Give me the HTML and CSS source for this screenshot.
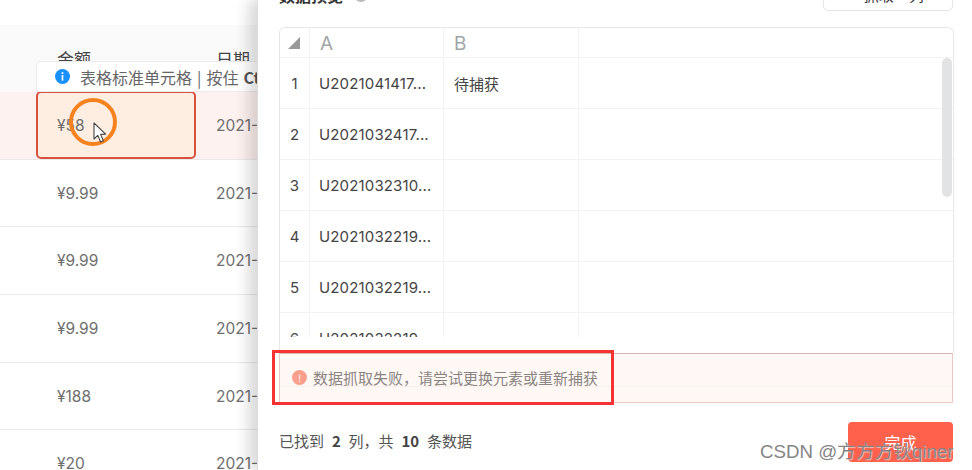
FILE: index.html
```html
<!DOCTYPE html>
<html lang="zh">
<head>
<meta charset="utf-8">
<title>数据预览</title>
<link rel="stylesheet" href="styles.css">
</head>
<body>
<div class="app">
  <main class="page">
    <div class="page-top"></div>
    <div class="row head"><span class="c1">金额</span><span class="c2">日期</span></div>
    <div class="row hot"><div class="c1 picked">¥58</div><span class="c2">2021-04-14</span></div>
    <div class="row"><span class="c1">¥9.99</span><span class="c2">2021-03-24</span></div>
    <div class="row"><span class="c1">¥9.99</span><span class="c2">2021-03-23</span></div>
    <div class="row"><span class="c1">¥9.99</span><span class="c2">2021-03-22</span></div>
    <div class="row"><span class="c1">¥188</span><span class="c2">2021-03-22</span></div>
    <div class="row"><span class="c1">¥20</span><span class="c2">2021-03-22</span></div>
    <div class="tip">
      <svg class="tip-ico" viewBox="0 0 16 16"><circle cx="8" cy="8" r="8" fill="#1890ff"/><rect x="7.1" y="3.4" width="1.8" height="1.9" fill="#fff"/><rect x="7.1" y="6.4" width="1.8" height="6" fill="#fff"/></svg>
      <span>表格标准单元格 | 按住 <b>Ctrl</b></span>
    </div>
    <div class="ring"></div>
    <svg class="cursor" viewBox="0 0 14 22"><path d="M1 1 L1 17 L4.8 13.4 L7.6 20 L10.4 18.8 L7.6 12.4 L12.6 12.2 Z" fill="#fff" stroke="#444" stroke-width="1.1" stroke-linejoin="round"/></svg>
  </main>
  <section class="drawer">
    <header class="d-head">
      <div class="d-title"><b>数据预览</b><span class="help"></span></div>
      <button class="add">+ 抓取一列</button>
    </header>
    <div class="sheet">
      <div class="s-row s-head">
        <div class="s-n"><i class="corner"></i></div><div class="s-a">A</div><div class="s-b">B</div><div class="s-r"></div>
      </div>
      <div class="s-row"><div class="s-n">1</div><div class="s-a">U2021041417...</div><div class="s-b">待捕获</div><div class="s-r"></div></div>
      <div class="s-row"><div class="s-n">2</div><div class="s-a">U2021032417...</div><div class="s-b"></div><div class="s-r"></div></div>
      <div class="s-row"><div class="s-n">3</div><div class="s-a">U2021032310...</div><div class="s-b"></div><div class="s-r"></div></div>
      <div class="s-row"><div class="s-n">4</div><div class="s-a">U2021032219...</div><div class="s-b"></div><div class="s-r"></div></div>
      <div class="s-row"><div class="s-n">5</div><div class="s-a">U2021032219...</div><div class="s-b"></div><div class="s-r"></div></div>
      <div class="s-row s-cut"><div class="s-n">6</div><div class="s-a">U2021032219...</div><div class="s-b"></div><div class="s-r"></div></div>
      <div class="thumb"></div>
    </div>
    <div class="alert">
      <span class="alert-ico">!</span><span>数据抓取失败，请尝试更换元素或重新捕获</span>
    </div>
    <footer class="d-foot">
      <span class="count">已找到 <b>2</b> 列，共 <b>10</b> 条数据</span>
      <button class="done">完成</button>
    </footer>
    <div class="mark"></div>
  </section>
  <div class="wm">CSDN @方方方钬qiner</div>
</div>
</body>
</html>
```
FILE: styles.css
```css
* { box-sizing: border-box; }
html, body { margin: 0; height: 100%; overflow: hidden; background: #fff; }
body { font-family: "Noto Sans CJK SC", "Noto Sans", sans-serif; color: #555; }
.app { position: relative; display: flex; width: 972px; height: 470px; overflow: hidden; }

.page { position: relative; width: 257px; flex: none; overflow: hidden; }
.page-top { height: 25px; }
.row { display: flex; align-items: center; height: 67.7px; padding-left: 36px; border-bottom: 1px solid #e9e9e9; font-size: 15.5px; color: #6e6e6e; font-family: "Inter", "Noto Sans CJK SC", sans-serif; }
.row .c1 { width: 160px; flex: none; padding-left: 21px; }
.row .c2 { white-space: nowrap; padding-left: 20px; }
.head { height: 67px; background: #fafafa; color: #444; border-bottom: none; font-size: 17px; font-family: "Noto Sans CJK SC", sans-serif; }
.hot { background: #fef2f0; }
.picked { height: 68px; display: flex; align-items: center; background: #feeee2; border: 2px solid #d9503f; border-radius: 5px; padding-left: 19px !important; }
.tip { position: absolute; left: 36px; top: 61px; width: 240px; height: 31px; display: flex; align-items: center; gap: 10px; padding-left: 18px; background: #fff; border: 1px solid #ececec; border-radius: 4px 0 0 0; font-size: 16px; color: #666; white-space: nowrap; word-spacing: 1.5px; }
.tip b { color: #555; }
.tip-ico { width: 15px; height: 15px; flex: none; }
.ring { position: absolute; left: 69px; top: 98px; width: 48px; height: 48px; border: 4px solid #f5821f; border-radius: 50%; }
.cursor { position: absolute; left: 92.5px; top: 121.5px; width: 14px; height: 22px; }

.drawer { position: relative; flex: 1; padding: 0 18px 0 21px; background: #fff; box-shadow: -8px 0 14px rgba(0,0,0,.16); border-left: 1px solid #ddd; }
.d-head { display: flex; justify-content: space-between; align-items: flex-start; height: 49px; margin-top: -22px; }
.d-title { display: flex; align-items: center; gap: 11px; margin-top: 5px; font-size: 16px; color: #333; }
.help { width: 14px; height: 14px; border: 2px solid #bbb; border-radius: 50%; }
.add { width: 130px; height: 33px; margin-right: 1px; background: #fff; border: 1px solid #e6e6e6; border-radius: 5px; font: 15px "Noto Sans CJK SC", sans-serif; color: #333; }
.sheet { position: relative; height: 326px; overflow: hidden; border: 1px solid #e8e8e8; border-bottom: none; border-radius: 6px 6px 0 0; }
.s-row { display: flex; height: 51px; border-bottom: 1px solid #f2f2f2; font-size: 15px; color: #444; font-family: "Inter", "Noto Sans CJK SC", sans-serif; }
.s-head { height: 30px; padding-top: 0; font-size: 19px; color: #a0a6a6; }
.s-head > .s-a, .s-head > .s-b { padding-top: 2px; padding-left: 10px; }
.s-row > div { display: flex; align-items: center; border-right: 1px solid #f2f2f2; white-space: nowrap; }
.s-n { width: 30px; justify-content: center; }
.s-a { width: 134px; padding-left: 9px; letter-spacing: .15px; }
.s-b { width: 135px; padding-left: 10px; }
.s-r { flex: 1; border-right: none !important; }
.s-cut { height: 24px; overflow: hidden; border-bottom: none; }
.s-cut > div { height: 51px; flex-shrink: 0; }
.s-cut > .s-r { flex: 1; }
.corner { width: 0; height: 0; margin-right: 2px; border-style: solid; border-width: 0 0 12px 12px; border-color: transparent transparent #999 transparent; }
.thumb { position: absolute; right: 1px; top: 30px; width: 10px; height: 139px; background: #e2e3e4; border-radius: 5px; }
.alert { display: flex; align-items: center; gap: 6px; width: 674px; height: 50px; padding: 0 0 2px 12px; background: linear-gradient(#fff8f5 32px, #f9efec 32px, #f9efec 33px, #fff8f5 33px); border: 1px solid #ecc8c4; border-top-color: #d4b8b2; font-size: 15px; color: #8a8583; }
.alert-ico { display: flex; align-items: center; justify-content: center; width: 15px; height: 15px; border-radius: 50%; background: #fb9f8c; color: #fff; font-size: 10px; }
.d-foot { display: flex; align-items: center; justify-content: space-between; width: 674px; height: 40px; margin-top: 19px; }
.count { margin-bottom: 3px; font-size: 15px; color: #555; word-spacing: 4.5px; }
.count b { color: #444; }
.done { width: 105px; height: 40px; background: #ff614c; color: #fff; border: none; border-radius: 4px; font: 16px "Noto Sans CJK SC", sans-serif; }
.mark { position: absolute; left: 14px; top: 350px; width: 342px; height: 55px; border: 3px solid #f53333; }
.wm { position: absolute; left: 760px; top: 436px; font: 18.7px "Liberation Sans", "Noto Sans CJK SC", sans-serif; color: #858585; text-shadow: 1px 1px 1px rgba(255,255,255,.6); white-space: nowrap; }
```
